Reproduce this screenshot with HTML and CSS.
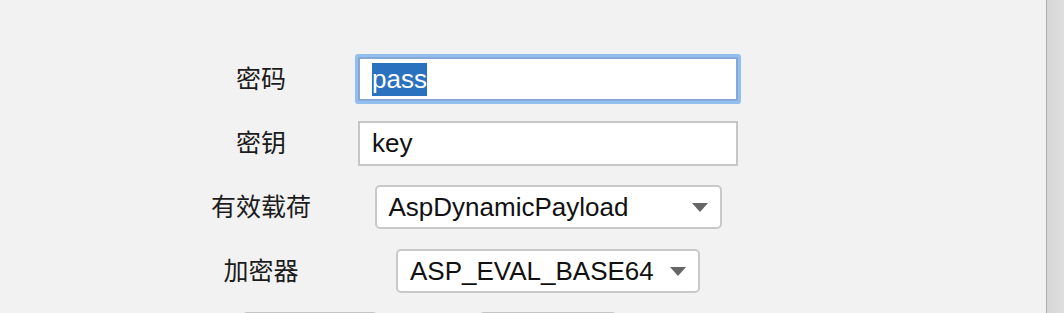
FILE: index.html
```html
<!DOCTYPE html>
<html lang="zh">
<head>
    <meta charset="UTF-8">
    <meta name="viewport" content="width=device-width, initial-scale=1.0">
    <title>连接配置</title>
    <link rel="stylesheet" href="styles.css">
</head>
<body>
    <div id="panel">
        <div class="form">
            <label class="label">密码</label>
            <div class="field focused"><span class="selected">pass</span></div>

            <label class="label">密钥</label>
            <div class="field">key</div>

            <label class="label">有效载荷</label>
            <div class="select payload">AspDynamicPayload<span class="arrow"></span></div>

            <label class="label">加密器</label>
            <div class="select cryption">ASP_EVAL_BASE64<span class="arrow"></span></div>

            <div class="buttons">
                <button class="btn first">测试连接</button>
                <button class="btn second">添加</button>
            </div>
        </div>
    </div>
    <div id="scrollbar"></div>
</body>
</html>
```

FILE: styles.css
```css
html, body {
    height: 100%;
}
body {
    margin: 0;
    display: flex;
    overflow: hidden;
    background-color: #f2f2f2;
    font-family: "Liberation Sans", "Noto Sans CJK SC", sans-serif;
    font-size: 26px;
    color: #111;
}
#panel {
    flex-grow: 1;
    padding-top: 47px;
}
#scrollbar {
    width: 17px;
    border-left: 1px solid #adadad;
    background: linear-gradient(to right, #d6d6d6, #dedede);
}
.form {
    margin-left: 174px;
    display: grid;
    grid-template-columns: 174px 400px;
    grid-auto-rows: 64px;
    align-items: center;
    justify-items: center;
}
.label {
    font-family: "Noto Sans CJK SC", sans-serif;
    font-size: 25px;
    line-height: 30px;
    padding-bottom: 4px;
    color: #1c1c1c;
}
.field {
    box-sizing: border-box;
    width: 380px;
    height: 45px;
    padding-left: 12px;
    background-color: #fff;
    border: 2px solid #c6c6c6;
    display: flex;
    align-items: center;
}
.field.focused {
    height: 44px;
    border-color: #86a8d6;
    border-radius: 1px;
    box-shadow: 0 0 0 3px #93bfef;
}
.selected {
    display: inline-block;
    line-height: 33px;
    background-color: #2a72c0;
    color: #fff;
}
.select {
    box-sizing: border-box;
    height: 44px;
    padding-left: 12px;
    background-color: #fff;
    border: 2px solid #c9c9c9;
    border-radius: 5px;
    display: flex;
    align-items: center;
    position: relative;
}
.select.payload {
    width: 347px;
}
.select.cryption {
    width: 304px;
}
.arrow {
    position: absolute;
    right: 12px;
    top: 16px;
    width: 0;
    height: 0;
    border-left: 8px solid transparent;
    border-right: 8px solid transparent;
    border-top: 9px solid #666;
}
.buttons {
    grid-column: 1 / -1;
    justify-self: start;
    align-self: start;
    margin-top: 9px;
    margin-left: 68px;
    display: flex;
    gap: 101px;
}
.btn {
    box-sizing: border-box;
    height: 44px;
    background-color: #fff;
    border: 2px solid #c4c4c4;
    border-radius: 5px;
    font-family: "Noto Sans CJK SC", sans-serif;
    font-size: 25px;
    color: #111;
}
.btn.first {
    width: 136px;
}
.btn.second {
    width: 138px;
}
```
